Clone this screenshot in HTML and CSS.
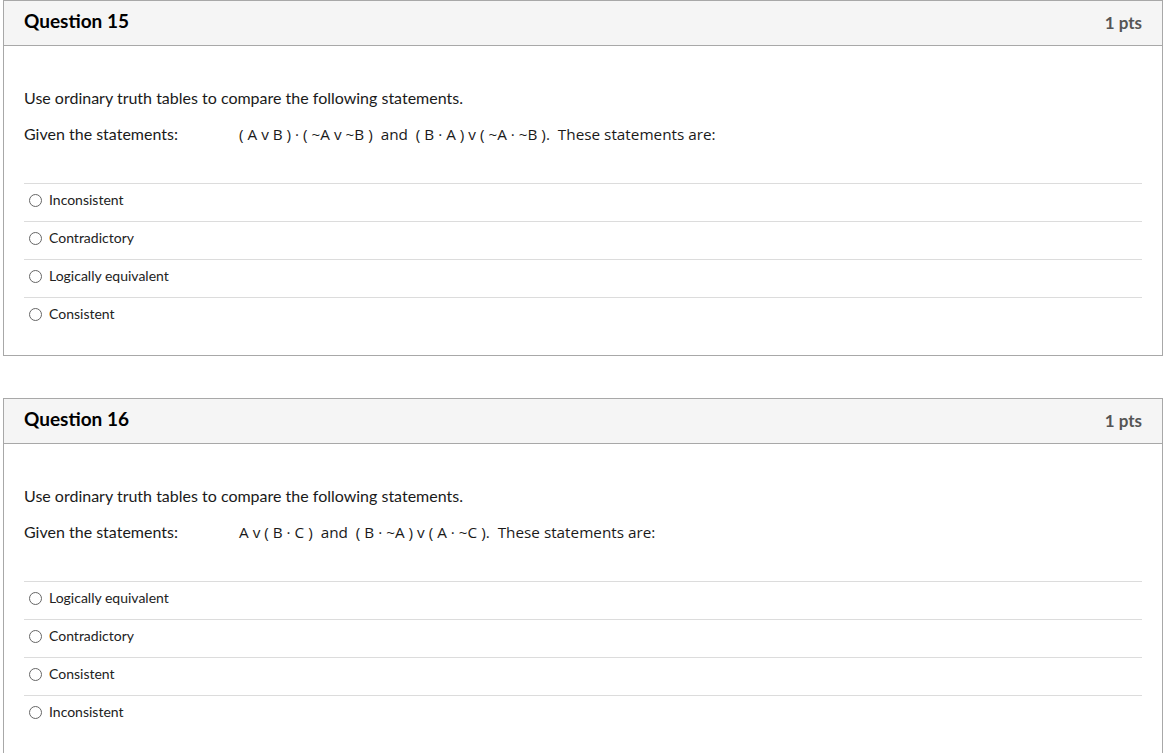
FILE: index.html
```html
<!DOCTYPE html>
<html>
<head>
<meta charset="utf-8">
<link rel="stylesheet" href="styles.css">
</head>
<body>
<div class="page">
  <div class="card">
    <div class="card-header">
      <span class="q-title">Question 15</span>
      <span class="q-pts">1 pts</span>
    </div>
    <div class="card-body">
      <p class="q-text">Use ordinary truth tables to compare the following statements.</p>
      <p class="q-text given"><span class="given-label">Given the statements:</span><span class="formula">( A v B ) · ( ~A v ~B )&nbsp; and&nbsp; ( B · A ) v ( ~A · ~B ).&nbsp; These statements are:</span></p>
      <div class="answers">
        <label class="answer"><span class="radio"></span>Inconsistent</label>
        <label class="answer"><span class="radio"></span>Contradictory</label>
        <label class="answer"><span class="radio"></span>Logically equivalent</label>
        <label class="answer"><span class="radio"></span>Consistent</label>
      </div>
    </div>
  </div>
  <div class="card">
    <div class="card-header">
      <span class="q-title">Question 16</span>
      <span class="q-pts">1 pts</span>
    </div>
    <div class="card-body">
      <p class="q-text">Use ordinary truth tables to compare the following statements.</p>
      <p class="q-text given"><span class="given-label">Given the statements:</span><span class="formula">A v ( B · C )&nbsp; and&nbsp; ( B · ~A ) v ( A · ~C ).&nbsp; These statements are:</span></p>
      <div class="answers">
        <label class="answer"><span class="radio"></span>Logically equivalent</label>
        <label class="answer"><span class="radio"></span>Contradictory</label>
        <label class="answer"><span class="radio"></span>Consistent</label>
        <label class="answer"><span class="radio"></span>Inconsistent</label>
      </div>
    </div>
  </div>
</div>
</body>
</html>
```
FILE: styles.css
```css
html, body {
  margin: 0;
  padding: 0;
  background: #fff;
}
body {
  font-family: Lato, "Liberation Sans", sans-serif;
  color: #2d3b45;
}
.page {
  padding: 0 2px 0 3px;
  display: flex;
  flex-direction: column;
  gap: 42px;
}
.card {
  border: 1px solid #a8a8a8;
  background: #fff;
}
.card-header {
  background: #f5f5f5;
  border-bottom: 1px solid #a8a8a8;
  height: 44px;
  display: flex;
  align-items: center;
  justify-content: space-between;
  padding: 0 20px 0 20px;
}
.q-title {
  font-weight: 700;
  font-size: 19px;
  color: #000;
  margin-top: -6px;
}
.q-pts {
  font-weight: 700;
  font-size: 17px;
  color: #555;
  margin-top: -2px;
}
.card-body {
  padding: 40px 20px 20px 20px;
}
.q-text {
  margin: 0 0 12px 0;
  font-size: 16px;
  line-height: 24px;
  color: #1a1a1a;
}
.given {
  display: flex;
  margin-bottom: 0;
}
.given-label {
  width: 215px;
}
.formula {
  font-family: "Open Sans", "Noto Sans", sans-serif;
  font-size: 15.3px;
  color: #1a1a1a;
}
.answers {
  margin-top: 37px;
}
.answer {
  display: flex;
  align-items: flex-start;
  border-top: 1px solid #dcdcdc;
  height: 30px;
  padding-top: 7px;
  line-height: 18px;
  font-size: 14px;
  color: #222;
}
.radio {
  width: 11px;
  height: 11px;
  border: 1px solid #666;
  border-radius: 50%;
  margin: 3px 7px 0 5px;
  flex: none;
}
```
